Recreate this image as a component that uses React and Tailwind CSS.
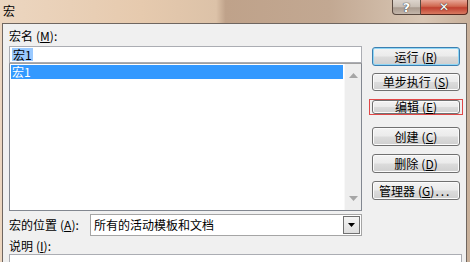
import React from "react";

const font = { fontFamily: '"Noto Sans CJK SC", "Liberation Sans", sans-serif' };

function Btn({ children, primary, className = "" }) {
  return (
    <div
      className={
        "w-[88px] flex items-center justify-center rounded-[3px] border text-[12px] leading-[12px] text-black " +
        (primary
          ? "border-[#3c7fb1] shadow-[inset_0_0_0_1px_#8fd6f5] "
          : "border-[#707070] shadow-[inset_0_0_0_1px_#fbfbfb] ") +
        "bg-[linear-gradient(to_bottom,#f3f3f3_0%,#ebebeb_48%,#dcdcdc_52%,#cfcfcf_100%)] " +
        className
      }
    >
      {children}
    </div>
  );
}

function Key({ k }) {
  return (
    <span className="ml-[3px]">
      (<u>{k}</u>)
    </span>
  );
}

export default function App() {
  return (
    <div
      className="relative w-[470px] h-[262px] overflow-hidden bg-[linear-gradient(to_right,#ecd6c0_0%,#e6caae_30%,#dcc2a8_46%,#bfa28a_48%,#c2a892_70%,#d8c6b4_90%,#c8b09a_100%)]"
      style={font}
    >
      {/* Title bar */}
      <div className="h-[23px] flex items-start justify-between">
        <div className="pl-[3px] pt-[5px] text-[12px] leading-[12px] text-black">宏</div>
        <div className="flex mr-[2px]">
          <div className="w-[29px] h-[15px] rounded-bl-[4px] border border-t-0 border-[#5a4a40] bg-[linear-gradient(to_bottom,#dcd4cc_0%,#c8beb4_50%,#a89a8e_55%,#c4b6aa_100%)] flex items-center justify-center">
            <span className="text-[13px] leading-[13px] font-bold text-white [text-shadow:0_0_1px_#333,0_0_1px_#333]" style={{ fontFamily: '"DejaVu Sans", sans-serif' }}>?</span>
          </div>
          <div className="w-[47px] h-[15px] rounded-br-[4px] border border-t-0 border-l-0 border-[#5a2a20] bg-[linear-gradient(to_bottom,#e8a898_0%,#d06850_45%,#c04030_55%,#d87a60_100%)] flex items-center justify-center">
            <span className="text-[12px] leading-[12px] font-bold text-white [text-shadow:0_0_1px_#333,0_0_1px_#333]" style={{ fontFamily: '"DejaVu Sans", sans-serif' }}>✕</span>
          </div>
        </div>
      </div>

      {/* Body */}
      <div className="ml-[2px] w-[465px] h-[260px] border border-[#6f6660] bg-[#f0f0f0] pl-[6px] text-[12px] leading-[14px] text-black">
        <div className="flex">
          {/* left column */}
          <div className="w-[353px] flex flex-col">
            <div className="h-[22px] pt-[5px]">
              宏名<Key k="M" />:
            </div>
            <div className="h-[17px] border border-[#abadb3] bg-white flex items-center pl-[2px]">
              <span className="bg-[#99c9ff] px-[1px] leading-[13px]">宏1</span>
            </div>
            <div className="h-[148px] border border-[#828790] border-t-[#a0a0a0] bg-white flex">
              <div className="flex-1 p-[1px]">
                <div className="h-[14px] bg-[#3399ff] text-white pl-[1px] leading-[14px]">宏1</div>
              </div>
              <div className="w-[17px] bg-[#eeeeee] border-l border-[#f8f8f8] flex flex-col items-center justify-between py-[9px]">
                <svg width="9" height="5" viewBox="0 0 9 5"><path d="M0 5 L4.5 0 L9 5 Z" fill="#a6a6a6" /></svg>
                <svg width="9" height="5" viewBox="0 0 9 5"><path d="M0 0 L9 0 L4.5 5 Z" fill="#a6a6a6" /></svg>
              </div>
            </div>
          </div>

          {/* right column */}
          <div className="ml-[10px] flex flex-col pt-[23px]">
            <Btn primary className="h-[19px]">
              运行<Key k="R" />
            </Btn>
            <Btn className="h-[18px] mt-[7px]">
              单步执行<Key k="S" />
            </Btn>
            <div className="mt-[8px] -ml-[3px] w-[94px] h-[16px] border border-[#e04848] flex items-center justify-center">
              <Btn className="h-[14px]">
                编辑<Key k="E" />
              </Btn>
            </div>
            <Btn className="h-[19px] mt-[12px]">
              创建<Key k="C" />
            </Btn>
            <Btn className="h-[19px] mt-[8px]">
              删除<Key k="D" />
            </Btn>
            <Btn className="h-[19px] mt-[8px] justify-start pl-[6px]">
              管理器<Key k="G" />
              <span className="tracking-[2px] ml-[1px]">...</span>
            </Btn>
          </div>
        </div>

        {/* location row */}
        <div className="mt-[3px] flex items-center h-[22px]">
          <div className="w-[81px]">
            宏的位置<Key k="A" />:
          </div>
          <div className="w-[272px] h-[22px] border border-[#a5a5a5] bg-white flex items-center">
            <div className="flex-1 pl-[3px]">所有的活动模板和文档</div>
            <div className="w-[17px] h-[18px] mr-[1px] border border-[#707070] bg-[linear-gradient(to_bottom,#f4f4f4,#dedede)] flex items-center justify-center">
              <svg width="7" height="4" viewBox="0 0 7 4"><path d="M0 0 L7 0 L3.5 4 Z" fill="#000" /></svg>
            </div>
          </div>
        </div>

        <div className="h-[18px] pt-[3px]">
          说明<Key k="I" />:
        </div>
        <div className="w-[453px] h-[20px] border border-[#abadb3] bg-white"></div>
      </div>
    </div>
  );
}
